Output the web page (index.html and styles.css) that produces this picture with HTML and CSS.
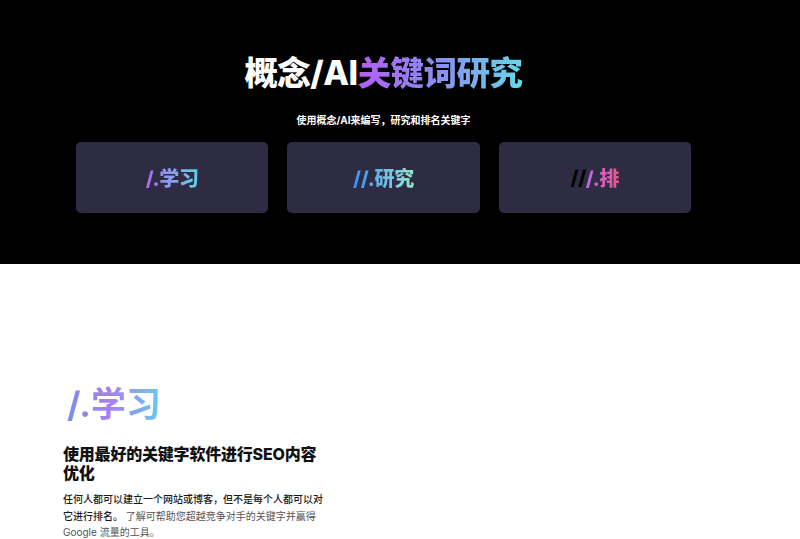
FILE: index.html
```html
<!DOCTYPE html>
<html lang="zh">
<head>
<meta charset="utf-8">
<link rel="stylesheet" href="styles.css">
</head>
<body>
<section class="hero">
  <div class="hero-inner">
    <h1 class="title">概念/AI<span class="grad-title">关键词研究</span></h1>
    <p class="subtitle">使用概念/AI来编写，研究和排名关键字</p>
    <div class="cards">
      <div class="card"><span class="grad-learn">/.学习</span></div>
      <div class="card"><span class="grad-research">//.研究</span></div>
      <div class="card"><span class="dark-slash">//</span><span class="grad-rank">/.排</span></div>
    </div>
  </div>
</section>
<section class="learn">
  <div class="learn-inner">
    <div class="big-label"><span class="grad-big">/.学习</span></div>
    <h2 class="learn-heading">使用最好的关键字软件进行SEO内容优化</h2>
    <p class="learn-text"><span class="strong">任何人都可以建立一个网站或博客，但不是每个人都可以对它进行排名。</span> <span class="muted">了解可帮助您超越竞争对手的关键字并赢得 Google 流量的工具。</span></p>
  </div>
</section>
</body>
</html>
```
FILE: styles.css
```css
* { box-sizing: border-box; }
html, body { margin: 0; padding: 0; }
body {
  font-family: Inter, "Noto Sans CJK SC", sans-serif;
  background: #fff;
  color: #111;
}
.hero {
  background: #000;
  height: 264px;
  padding-top: 51px;
}
.hero-inner {
  margin-left: 76px;
  width: 615px;
  display: flex;
  flex-direction: column;
  align-items: center;
}
.title {
  margin: 0;
  font-size: 33.5px;
  line-height: 44px;
  font-weight: 800;
  color: #fff;
  letter-spacing: -0.5px;
}
.grad-title {
  background: linear-gradient(90deg, #b35ef2 0%, #8b8af0 45%, #64d9e6 100%);
  -webkit-background-clip: text;
  background-clip: text;
  color: transparent;
}
.subtitle {
  margin: 18px 0 0;
  font-size: 10px;
  line-height: 14px;
  font-weight: 700;
  color: #fff;
}
.cards {
  margin-top: 15px;
  width: 100%;
  display: grid;
  grid-template-columns: repeat(3, 1fr);
  gap: 19px;
}
.card {
  height: 71px;
  background: #2d2c43;
  border-radius: 5px;
  display: flex;
  align-items: center;
  justify-content: center;
  font-size: 20px;
  font-weight: 800;
  letter-spacing: -0.3px;
}
.grad-learn {
  background: linear-gradient(90deg, #a66cf0 0%, #8aa0ee 50%, #5fd0e8 100%);
  -webkit-background-clip: text;
  background-clip: text;
  color: transparent;
}
.grad-research {
  background: linear-gradient(90deg, #3d8ef0 0%, #70bce6 50%, #8ee6c8 100%);
  -webkit-background-clip: text;
  background-clip: text;
  color: transparent;
}
.dark-slash { color: #000; }
.grad-rank {
  background: linear-gradient(90deg, #b96ae8 0%, #d45fb8 50%, #e05a8c 100%);
  -webkit-background-clip: text;
  background-clip: text;
  color: transparent;
}
.learn {
  padding: 118px 0 0 63px;
}
.learn-inner {
  width: 265px;
}
.big-label {
  font-size: 35px;
  line-height: 44px;
  font-weight: 700;
  padding-left: 4px;
}
.grad-big {
  background: linear-gradient(90deg, #7d8fe6 0%, #a77ff0 45%, #64cdee 100%);
  -webkit-background-clip: text;
  background-clip: text;
  color: transparent;
}
.learn-heading {
  margin: 19px 0 0;
  max-width: 258px;
  font-size: 16px;
  line-height: 19px;
  font-weight: 800;
  color: #111;
  letter-spacing: -0.2px;
}
.learn-text {
  margin: 8px 0 0;
  font-size: 10px;
  line-height: 16.5px;
}
.strong { color: #1a1a1a; font-weight: 500; }
.muted { color: #555; }
```
